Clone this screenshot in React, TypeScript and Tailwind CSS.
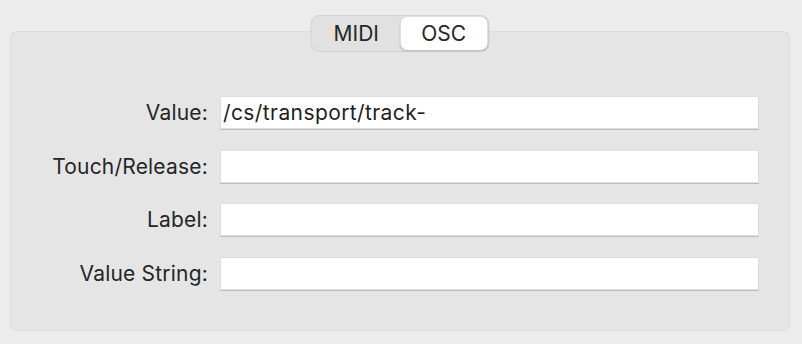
const rows = [
  { label: "Value:", value: "/cs/transport/track-" },
  { label: "Touch/Release:", value: "" },
  { label: "Label:", value: "" },
  { label: "Value String:", value: "" },
]

export default function App() {
  return (
    <div
      className="w-[802px] h-[344px] bg-[#ececec] pt-[31px] pl-[10px] text-[#252525]"
      style={{ fontFamily: "Inter, 'Liberation Sans', sans-serif" }}
    >
      <div className="relative w-[780px] h-[300px] rounded-[7px] bg-[#e5e5e5] border border-[#dcdcdc]">
        {/* segmented tabs */}
        <div className="absolute left-1/2 -translate-x-1/2 -top-[17px] flex w-[179px] h-[37px] p-[1px] rounded-[9px] bg-[#e1e1e1] border border-[#d3d3d3]">
          <button className="flex-1 flex items-center justify-center text-[21px] leading-none text-[#262626]">
            MIDI
          </button>
          <button className="flex-1 flex items-center justify-center rounded-[7px] bg-white text-[21px] leading-none text-[#262626] shadow-[0_1px_2px_rgba(0,0,0,0.2)]">
            OSC
          </button>
        </div>

        <div className="pt-[64px] flex flex-col gap-[20.5px]">
          {rows.map((row) => (
            <div key={row.label} className="flex items-center">
              <label className="w-[197px] text-right text-[21px] leading-none text-[#262626] tracking-[0.2px]">
                {row.label}
              </label>
              <div className="ml-[12px] w-[539px] h-[33px] flex items-center bg-white border border-[#dedede] shadow-[0_1px_0_#bdbdbd] pl-[2px] text-[21px] text-[#1f1f1f] tracking-[0.4px]">
                {row.value}
              </div>
            </div>
          ))}
        </div>
      </div>
    </div>
  )
}
